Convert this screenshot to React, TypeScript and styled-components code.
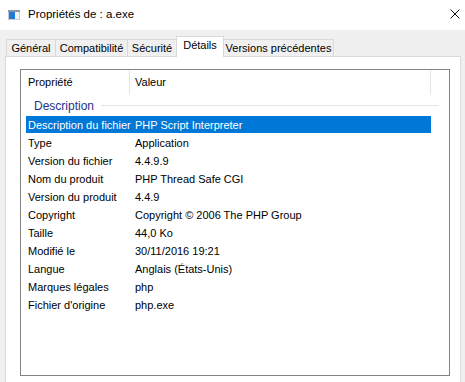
import styled, { createGlobalStyle } from 'styled-components';

const GlobalStyle = createGlobalStyle`
  html, body {
    margin: 0;
    padding: 0;
    background: #f0f0f0;
  }
  body {
    font-family: "Liberation Sans", Arial, sans-serif;
    color: #000;
  }
`;

const Window = styled.div`
  width: 465px;
  height: 382px;
  display: flex;
  flex-direction: column;
  overflow: hidden;
  background: #f0f0f0;
`;

const TitleBar = styled.div`
  height: 30px;
  flex: none;
  background: #fff;
  display: flex;
  align-items: center;
  padding: 0 5px 0 8px;
  box-sizing: border-box;
`;

const TitleText = styled.span`
  flex: 1;
  margin-left: 8px;
  font-size: 11.5px;
  margin-top: -2px;
`;

const CloseButton = styled.div`
  width: 10px;
  height: 10px;
  display: flex;
  margin-top: -3px;
`;

const Body = styled.div`
  flex: 1;
  display: flex;
  flex-direction: column;
  padding: 7px 4px 0 5px;
`;

const TabStrip = styled.div`
  display: flex;
  align-items: flex-end;
  height: 19px;
  padding-left: 1px;
`;

const Tab = styled.div<{ $w: number; $active?: boolean }>`
  box-sizing: border-box;
  width: ${(p) => p.$w}px;
  height: ${(p) => (p.$active ? 21 : 17)}px;
  margin-right: -1px;
  margin-bottom: ${(p) => (p.$active ? -1 : 0)}px;
  border: 1px solid #d9d9d9;
  border-bottom: none;
  background: ${(p) => (p.$active ? '#fff' : '#f0f0f0')};
  position: relative;
  z-index: ${(p) => (p.$active ? 2 : 1)};
  font-size: 11px;
  display: flex;
  align-items: ${(p) => (p.$active ? 'flex-start' : 'center')};
  padding-top: ${(p) => (p.$active ? 2 : 0)}px;
  justify-content: center;
  white-space: nowrap;
`;

const Panel = styled.div`
  flex: 1;
  background: #fff;
  border: 1px solid #d9d9d9;
  border-bottom: none;
  padding: 12px 10px 0 14px;
`;

const ListBox = styled.div`
  height: 307px;
  box-sizing: border-box;
  border: 1px solid #828282;
  font-size: 11px;
`;

const HeaderRow = styled.div`
  height: 25px;
  display: flex;
  align-items: stretch;
`;

const HeaderCell = styled.div<{ $w?: number; $pad: number }>`
  ${(p) => (p.$w ? `width: ${p.$w}px; flex: none;` : 'flex: 1;')}
  box-sizing: border-box;
  padding-left: ${(p) => p.$pad}px;
  display: flex;
  align-items: center;
  border-right: 1px solid #e5e5e5;
  padding-bottom: 1px;
`;

const HeaderFiller = styled.div`
  width: 18px;
`;

const GroupRow = styled.div`
  height: 21px;
  display: flex;
  align-items: center;
  padding: 0 10px 0 13px;
`;

const GroupTitle = styled.span`
  color: #1e3287;
  font-size: 12px;
`;

const GroupLine = styled.div`
  flex: 1;
  height: 1px;
  background: #e5e5e5;
  margin-left: 7px;
`;

const Row = styled.div<{ $selected?: boolean }>`
  height: 17px;
  margin: 0 18px 1px 5px;
  display: flex;
  align-items: center;
  background: ${(p) => (p.$selected ? '#0078d7' : 'transparent')};
  color: ${(p) => (p.$selected ? '#fff' : '#000')};
`;

const NameCell = styled.div`
  width: 109px;
  flex: none;
  padding-left: 2px;
  box-sizing: border-box;
  white-space: nowrap;
`;

const ValueCell = styled.div`
  flex: 1;
  white-space: nowrap;
`;

const tabs = [
  { label: 'Général', w: 50 },
  { label: 'Compatibilité', w: 73 },
  { label: 'Sécurité', w: 50 },
  { label: 'Détails', w: 48, active: true },
  { label: 'Versions précédentes', w: 111 },
];

const rows: [string, string][] = [
  ['Description du fichier', 'PHP Script Interpreter'],
  ['Type', 'Application'],
  ['Version du fichier', '4.4.9.9'],
  ['Nom du produit', 'PHP Thread Safe CGI'],
  ['Version du produit', '4.4.9'],
  ['Copyright', 'Copyright © 2006 The PHP Group'],
  ['Taille', '44,0 Ko'],
  ['Modifié le', '30/11/2016 19:21'],
  ['Langue', 'Anglais (États-Unis)'],
  ['Marques légales', 'php'],
  ["Fichier d'origine", 'php.exe'],
];

const AppIcon = () => (
  <svg width="12" height="10" viewBox="0 0 12 10">
    <rect x="0" y="0" width="12" height="10" fill="#c8ccd2" />
    <rect x="1" y="2" width="10" height="7" fill="#f4f4f4" />
    <rect x="1" y="2" width="6" height="7" fill="#1f7bd6" />
    <rect x="0" y="0" width="12" height="2" fill="#8896aa" />
  </svg>
);

export default function App() {
  return (
    <Window>
      <GlobalStyle />
      <TitleBar>
        <AppIcon />
        <TitleText>Propriétés de : a.exe</TitleText>
        <CloseButton>
          <svg width="10" height="10" viewBox="0 0 10 10">
            <path d="M0.5 0.5 L9.5 9.5 M9.5 0.5 L0.5 9.5" stroke="#111" strokeWidth="1" />
          </svg>
        </CloseButton>
      </TitleBar>
      <Body>
        <TabStrip>
          {tabs.map((t) => (
            <Tab key={t.label} $w={t.w} $active={t.active}>
              {t.label}
            </Tab>
          ))}
        </TabStrip>
        <Panel>
          <ListBox>
            <HeaderRow>
              <HeaderCell $w={109} $pad={7}>Propriété</HeaderCell>
              <HeaderCell $pad={5}>Valeur</HeaderCell>
              <HeaderFiller />
            </HeaderRow>
            <GroupRow>
              <GroupTitle>Description</GroupTitle>
              <GroupLine />
            </GroupRow>
            {rows.map(([name, value], i) => (
              <Row key={name} $selected={i === 0}>
                <NameCell>{name}</NameCell>
                <ValueCell>{value}</ValueCell>
              </Row>
            ))}
          </ListBox>
        </Panel>
      </Body>
    </Window>
  );
}
